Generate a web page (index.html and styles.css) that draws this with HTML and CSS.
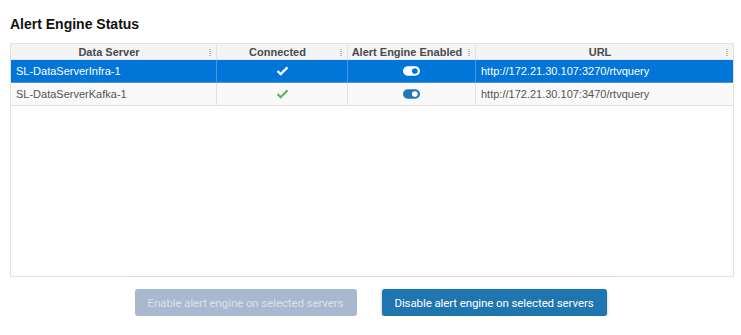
FILE: index.html
```html
<!DOCTYPE html>
<html>
<head>
	<title>Alert Engine Status</title>
	<link rel="stylesheet" href="styles.css">
</head>
<body>
	<h1 class="title">Alert Engine Status</h1>

	<div class="grid">
		<div class="row head">
			<div class="cell c1">Data Server<span class="menu"></span></div>
			<div class="cell c2">Connected<span class="menu"></span></div>
			<div class="cell c3">Alert Engine Enabled<span class="menu"></span></div>
			<div class="cell c4">URL<span class="menu"></span></div>
		</div>

		<div class="row selected">
			<div class="cell c1 left">SL-DataServerInfra-1</div>
			<div class="cell c2">
				<svg class="check" viewBox="0 0 14 11" width="13" height="10"><path d="M1.5 5.5 L5 9 L12.5 1.5" fill="none" stroke="currentColor" stroke-width="2.6"/></svg>
			</div>
			<div class="cell c3">
				<svg class="toggle" viewBox="0 0 18 10" width="17" height="10"><rect x="0" y="0" width="18" height="10" rx="5" fill="currentColor"/><circle cx="12.5" cy="5" r="3" class="knob"/></svg>
			</div>
			<div class="cell c4 left">http://172.21.30.107:3270/rtvquery</div>
		</div>

		<div class="row alt">
			<div class="cell c1 left">SL-DataServerKafka-1</div>
			<div class="cell c2">
				<svg class="check" viewBox="0 0 14 11" width="13" height="10"><path d="M1.5 5.5 L5 9 L12.5 1.5" fill="none" stroke="currentColor" stroke-width="2.4"/></svg>
			</div>
			<div class="cell c3">
				<svg class="toggle" viewBox="0 0 18 10" width="17" height="10"><rect x="0" y="0" width="18" height="10" rx="5" fill="currentColor"/><circle cx="12.5" cy="5" r="3" class="knob"/></svg>
			</div>
			<div class="cell c4 left">http://172.21.30.107:3470/rtvquery</div>
		</div>

		<div class="scrollbar"></div>
	</div>

	<div class="actions">
		<button class="btn disabled">Enable alert engine on selected servers</button>
		<button class="btn primary">Disable alert engine on selected servers</button>
	</div>
</body>
</html>
```

FILE: styles.css
```css
body {
	margin: 0;
	padding: 0 7px 0 10px;
	font-family: "Liberation Sans", Arial, sans-serif;
	background: #fff;
}

.title {
	margin: 0;
	padding-top: 16px;
	height: 27px;
	font-size: 14px;
	font-weight: bold;
	color: #111;
	line-height: 16px;
}

.grid {
	position: relative;
	height: 232px;
	border: 1px solid #e2e2e2;
	background: #fff;
}

.row {
	display: grid;
	grid-template-columns: 206px 131px 128px 1fr;
	font-size: 11px;
	color: #555;
}

.cell {
	position: relative;
	display: flex;
	align-items: center;
	justify-content: center;
	border-right: 1px solid #e2e2e2;
	border-bottom: 1px solid #e2e2e2;
}

.cell.c4 {
	border-right: none;
}

.cell.left {
	justify-content: flex-start;
	padding-left: 5px;
}

.head {
	height: 16px;
	background: #f4f4f4;
	font-weight: bold;
	color: #4a4a4a;
}

.head .cell {
	padding-right: 9px;
	border-bottom: 1px solid #e6e6e6;
}

.menu {
	position: absolute;
	right: 5px;
	top: 5px;
	width: 2px;
	height: 7px;
	background: repeating-linear-gradient(#bbb 0 1px, transparent 1px 2px);
}

.selected {
	height: 23px;
	background: #0275d8;
	color: #fff;
}

.selected .cell {
	border-right-color: #4a96da;
	border-bottom-color: #4a96da;
}

.selected .check {
	color: #fff;
}

.selected .toggle {
	color: #fff;
}

.selected .knob {
	fill: #0275d8;
}

.alt {
	height: 23px;
	background: #f9f9f9;
}

.alt .check {
	color: #5cb85c;
}

.alt .toggle {
	color: #2377b5;
}

.alt .knob {
	fill: #fff;
}

.scrollbar {
	position: absolute;
	left: 115px;
	right: 116px;
	bottom: -1px;
	height: 1px;
	background: #dcdcdc;
}

.actions {
	display: flex;
	justify-content: center;
	gap: 25px;
	padding-top: 12px;
	padding-right: 3px;
}

.btn {
	height: 27px;
	padding: 0;
	border: none;
	border-radius: 3px;
	font-family: Roboto, "Liberation Sans", sans-serif;
	font-size: 11.5px;
	letter-spacing: -0.1px;
	white-space: nowrap;
}

.btn.disabled {
	width: 222px;
	background: #a9b8ce;
	color: #d9e1ec;
}

.btn.primary {
	width: 225px;
	background: #1f75b0;
	color: #fff;
	box-shadow: 0 1px 3px rgba(0, 0, 0, 0.3);
}
```
